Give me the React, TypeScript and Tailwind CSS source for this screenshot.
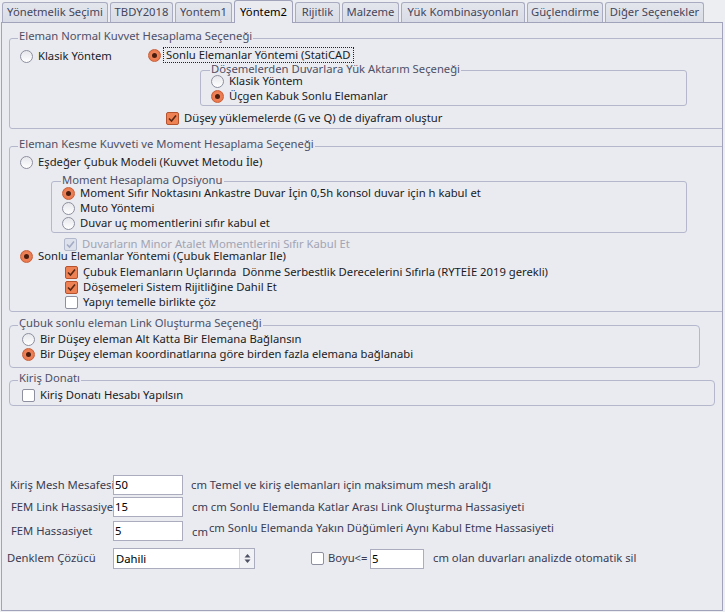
import type { ReactNode } from "react";

type Tab = { label: string; width: string; active?: boolean };

const tabs: Tab[] = [
  { label: "Yönetmelik Seçimi", width: "w-[106px]" },
  { label: "TBDY2018", width: "w-[63px]" },
  { label: "Yontem1", width: "w-[57px]" },
  { label: "Yöntem2", width: "w-[59px]", active: true },
  { label: "Rijitlik", width: "w-[45px]" },
  { label: "Malzeme", width: "w-[57px]" },
  { label: "Yük Kombinasyonları", width: "w-[124px]" },
  { label: "Güçlendirme", width: "w-[76px]" },
  { label: "Diğer Seçenekler", width: "w-[99px]" },
];

function RadioDot({ checked }: { checked: boolean }) {
  if (checked) {
    return (
      <span className="flex h-[13px] w-[13px] shrink-0 items-center justify-center rounded-full border border-[#c85f38] bg-[radial-gradient(circle,#f09068_0%,#e96d40_100%)]">
        <span className="h-[5px] w-[5px] rounded-full bg-[#4a1c0d]" />
      </span>
    );
  }
  return (
    <span className="h-[13px] w-[13px] shrink-0 rounded-full border border-[#8e8f9f] bg-[linear-gradient(#e6e7ec,#ffffff)]" />
  );
}

function Radio({
  checked = false,
  children,
  className = "",
}: {
  checked?: boolean;
  children: ReactNode;
  className?: string;
}) {
  return (
    <div className={`flex h-[15px] items-center gap-[5px] whitespace-nowrap ${className}`}>
      <RadioDot checked={checked} />
      <span>{children}</span>
    </div>
  );
}

function Box({ checked = false, disabled = false }: { checked?: boolean; disabled?: boolean }) {
  if (disabled) {
    return (
      <span className="flex h-[13px] w-[13px] shrink-0 items-center justify-center rounded-[2px] border border-[#b3b9cc] bg-[#dde1ec]">
        <svg width="11" height="11" viewBox="0 0 11 11">
          <path d="M2 5.5 L4.5 8 L9 2.5" fill="none" stroke="#a3abc4" strokeWidth="1.6" />
        </svg>
      </span>
    );
  }
  if (checked) {
    return (
      <span className="flex h-[13px] w-[13px] shrink-0 items-center justify-center rounded-[2px] border border-[#b5532e] bg-[#ef8254]">
        <svg width="11" height="11" viewBox="0 0 11 11">
          <path d="M2 5.5 L4.5 8 L9 2.5" fill="none" stroke="#5a2815" strokeWidth="1.6" />
        </svg>
      </span>
    );
  }
  return <span className="h-[13px] w-[13px] shrink-0 rounded-[2px] border border-[#8e8f9f] bg-white" />;
}

function Check({
  checked = false,
  disabled = false,
  children,
  className = "",
}: {
  checked?: boolean;
  disabled?: boolean;
  children: ReactNode;
  className?: string;
}) {
  return (
    <div
      className={`flex h-[15px] items-center gap-[5px] whitespace-nowrap ${
        disabled ? "text-[#a2a4b4]" : ""
      } ${className}`}
    >
      <Box checked={checked} disabled={disabled} />
      <span>{children}</span>
    </div>
  );
}

function Field({ value, className = "" }: { value: string; className?: string }) {
  return (
    <div
      className={`h-[20px] shrink-0 border border-[#abadbf] bg-white pl-[1px] leading-[18px] text-black ${className}`}
    >
      {value}
    </div>
  );
}

export default function App() {
  return (
    <div className="h-[612px] w-[725px] overflow-hidden bg-[#eceef2] text-[11.25px] text-[#1b1b1f] [font-family:'Noto_Sans',sans-serif]">
      <div className="relative z-10 flex h-[22px] items-end gap-[2px] pl-[2px]">
        {tabs.map((tab) =>
          tab.active ? (
            <div
              key={tab.label}
              className={`-mb-px flex h-[23px] items-center justify-center rounded-t-[3px] border border-b-0 border-[#a0a3ba] bg-[#e9ebf0] text-black ${tab.width}`}
            >
              {tab.label}
            </div>
          ) : (
            <div
              key={tab.label}
              className={`flex h-[20px] items-center justify-center rounded-t-[3px] border border-b-0 border-[#a9acc0] bg-[linear-gradient(#e4e6ed,#d9dce6)] text-[#45465a] ${tab.width}`}
            >
              {tab.label}
            </div>
          ),
        )}
      </div>

      <div className="ml-[1px] flex h-[589px] w-[722px] flex-col overflow-hidden border border-[#a0a3ba] bg-[#e9ebf0]">
        {/* Normal kuvvet */}
        <fieldset className="ml-[7px] mt-[7px] w-[720px] shrink-0 rounded-[3px] border border-[#b5b7cd] pb-[2px]">
          <legend className="ml-[8px] px-[1px] pb-[4px] leading-[12px] text-[#4f5066]">
            Eleman Normal Kuvvet Hesaplama Seçeneği
          </legend>
          <div className="flex">
            <div className="w-[138px] pl-[10px] pt-[3px]">
              <Radio>Klasik Yöntem</Radio>
            </div>
            <div className="flex flex-col pt-[1px]">
              <div className="flex h-[16px] items-center whitespace-nowrap">
                <RadioDot checked />
                <span className="ml-[2px] border border-dotted border-[#222] px-[2px] leading-[14px]">
                  Sonlu Elemanlar Yöntemi (StatiCAD
                </span>
              </div>
              <fieldset className="ml-[52px] w-[487px] rounded-[3px] border border-[#b5b7cd] pb-[1px]">
                <legend className="ml-[9px] px-[1px] pb-[3px] leading-[12px] text-[#4f5066]">
                  Döşemelerden Duvarlara Yük Aktarım Seçeneği
                </legend>
                <div className="-mt-[4px] pl-[10px]">
                  <Radio>Klasik Yöntem</Radio>
                  <Radio checked>Üçgen Kabuk Sonlu Elemanlar</Radio>
                </div>
              </fieldset>
              <Check checked className="ml-[18px] mt-[5px]">
                Düşey yüklemelerde (G ve Q) de diyafram oluştur
              </Check>
            </div>
          </div>
        </fieldset>

        {/* Kesme kuvveti ve moment */}
        <fieldset className="ml-[7px] mt-[9px] w-[720px] shrink-0 rounded-[3px] border border-[#b5b7cd] pb-[1px]">
          <legend className="ml-[8px] px-[1px] pb-[4px] leading-[12px] text-[#4f5066]">
            Eleman Kesme Kuvveti ve Moment Hesaplama Seçeneği
          </legend>
          <Radio className="ml-[10px] mt-[1px]">Eşdeğer Çubuk Modeli (Kuvvet Metodu İle)</Radio>
          <fieldset className="ml-[41px] mt-[4px] w-[636px] rounded-[3px] border border-[#b5b7cd] pb-[1px]">
            <legend className="ml-[9px] px-[1px] pb-[3px] leading-[12px] text-[#4f5066]">
              Moment Hesaplama Opsiyonu
            </legend>
            <div className="-mt-[3px] pl-[10px]">
              <Radio checked>Moment Sıfır Noktasını Ankastre Duvar İçin 0,5h konsol duvar için h kabul et</Radio>
              <Radio>Muto Yöntemi</Radio>
              <Radio>Duvar uç momentlerini sıfır kabul et</Radio>
            </div>
          </fieldset>
          <Check disabled className="ml-[54px] mt-[4px]">
            Duvarların Minor Atalet Momentlerini Sıfır Kabul Et
          </Check>
          <Radio checked className="-mt-[3px] ml-[10px]">
            Sonlu Elemanlar Yöntemi (Çubuk Elemanlar Ile)
          </Radio>
          <Check checked className="ml-[55px] mt-[1px]">
            Çubuk Elemanların Uçlarında&nbsp; Dönme Serbestlik Derecelerini Sıfırla (RYTEİE 2019 gerekli)
          </Check>
          <Check checked className="ml-[55px]">
            Döşemeleri Sistem Rijitliğine Dahil Et
          </Check>
          <Check className="ml-[55px]">Yapıyı temelle birlikte çöz</Check>
        </fieldset>

        {/* Link */}
        <fieldset className="ml-[7px] mt-[5px] w-[691px] shrink-0 rounded-[4px] border border-[#b5b7cd] pb-[5px]">
          <legend className="ml-[8px] px-[1px] pb-[4px] leading-[12px] text-[#4f5066]">
            Çubuk sonlu eleman Link Oluşturma Seçeneği
          </legend>
          <div className="-mt-[1px] pl-[12px]">
            <Radio>Bir Düşey eleman Alt Katta Bir Elemana Bağlansın</Radio>
            <Radio checked>Bir Düşey eleman koordinatlarına göre birden fazla elemana bağlanabi</Radio>
          </div>
        </fieldset>

        {/* Kiriş donatı */}
        <fieldset className="ml-[7px] mt-[4px] w-[706px] shrink-0 rounded-[4px] border border-[#b5b7cd] pb-[2px]">
          <legend className="ml-[8px] px-[1px] pb-[4px] leading-[12px] text-[#4f5066]">Kiriş Donatı</legend>
          <Check className="ml-[12px]">Kiriş Donatı Hesabı Yapılsın</Check>
        </fieldset>

        {/* Mesh / hassasiyet */}
        <div className="mt-[69px] flex flex-col whitespace-nowrap text-[#3a3b52]">
          <div className="flex h-[20px] items-center">
            <span className="ml-[8px] w-[103px] overflow-hidden">Kiriş Mesh Mesafesi</span>
            <Field value="50" className="w-[70px]" />
            <span className="ml-[8px]">cm Temel ve kiriş elemanları için maksimum mesh aralığı</span>
          </div>
          <div className="mt-[2px] flex h-[20px] items-center">
            <span className="ml-[9px] w-[102px] overflow-hidden">FEM Link Hassasiye</span>
            <Field value="15" className="w-[70px]" />
            <span className="ml-[9px]">cm cm Sonlu Elemanda Katlar Arası Link Oluşturma Hassasiyeti</span>
          </div>
          <div className="mt-[4px] flex h-[20px] items-center">
            <span className="ml-[9px] w-[102px] overflow-hidden">FEM Hassasiyet</span>
            <Field value="5" className="w-[70px]" />
            <span className="ml-[9px] mt-[2px]">cm</span>
            <span className="mb-[6px] ml-[1px]">
              cm Sonlu Elemanda Yakın Düğümleri Aynı Kabul Etme Hassasiyeti
            </span>
          </div>
          <div className="mt-[7px] flex h-[21px] items-center">
            <span className="ml-[5px] w-[106px] overflow-hidden">Denklem Çözücü</span>
            <div className="flex h-[21px] w-[142px] shrink-0 border border-[#abadbf] bg-white">
              <span className="flex-1 pl-[2px] leading-[19px] text-black">Dahili</span>
              <span className="flex w-[15px] items-center justify-center border-l border-[#d3d4dd] bg-[#f1f2f5]">
                <svg width="7" height="11" viewBox="0 0 7 11">
                  <path d="M3.5 1 L6.5 4.5 H0.5 Z" fill="#4d5163" />
                  <path d="M3.5 10 L6.5 6.5 H0.5 Z" fill="#4d5163" />
                </svg>
              </span>
            </div>
            <div className="ml-[56px] flex items-center gap-[4px]">
              <Box />
              <span className="w-[42px]">Boyu&lt;=</span>
            </div>
            <Field value="5" className="w-[54px]" />
            <span className="ml-[9px]">cm olan duvarları analizde otomatik sil</span>
          </div>
        </div>
      </div>
    </div>
  );
}
